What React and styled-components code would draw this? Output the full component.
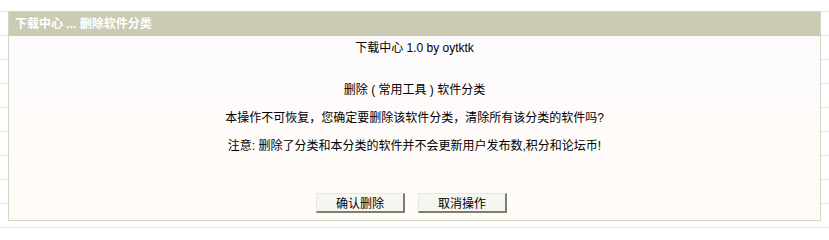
import React from "react";
import styled, { createGlobalStyle } from "styled-components";

const Global = createGlobalStyle`
  html, body { margin: 0; padding: 0; }
  body {
    background-color: #ffffff;
    background-image: repeating-linear-gradient(
      to bottom,
      transparent 0px,
      transparent 11px,
      #e3e3e3 11px,
      #e3e3e3 12px,
      transparent 12px,
      transparent 24px
    );
    font-family: "Liberation Sans", "Noto Sans CJK SC", sans-serif;
    font-size: 12px;
    color: #000;
    height: 233px;
    overflow: hidden;
  }
`;

const Page = styled.div`
  padding: 11px 8px 0 8px;
`;

const Panel = styled.div`
  border: 1px solid #d6d6c6;
  background: linear-gradient(to bottom, #fdfafd 0%, #fffcf7 100%);
  padding: 0;
`;

const Header = styled.div`
  height: 24px;
  line-height: 24px;
  background: #cbcbb3;
  color: #ffffff;
  font-weight: bold;
  padding-left: 6px;
  font-size: 12px;
`;

const Body = styled.div`
  display: flex;
  flex-direction: column;
  align-items: center;
  padding-bottom: 7px;
`;

const Line = styled.div`
  height: ${(p) => p.$h || 28}px;
  line-height: ${(p) => p.$h || 28}px;
  margin-top: ${(p) => p.$mt || 0}px;
  text-align: center;
  white-space: nowrap;
`;

const Buttons = styled.div`
  display: flex;
  gap: 13px;
  margin-top: 33px;
  padding-right: 6px;
`;

const Button = styled.button`
  width: ${(p) => p.$w}px;
  height: 20px;
  padding: 0;
  font-family: "Liberation Sans", "Noto Sans CJK SC", sans-serif;
  font-size: 12px;
  color: #000;
  background: #f6f6f1;
  border-style: solid;
  border-width: 1px 2px 2px 1px;
  border-color: #e6e6de #7d7d72 #7d7d72 #e6e6de;
  cursor: pointer;
`;

export default function App() {
  return (
    <>
      <Global />
      <Page>
        <Panel>
          <Header>下载中心 ... 删除软件分类</Header>
          <Body>
            <Line $h={24}>下载中心 1.0 by oytktk</Line>
            <Line $mt={16}>删除 ( 常用工具 ) 软件分类</Line>
            <Line>本操作不可恢复，您确定要删除该软件分类，清除所有该分类的软件吗?</Line>
            <Line>注意: 删除了分类和本分类的软件并不会更新用户发布数,积分和论坛币!</Line>
            <Buttons>
              <Button $w={89}>确认删除</Button>
              <Button $w={89}>取消操作</Button>
            </Buttons>
          </Body>
        </Panel>
      </Page>
    </>
  );
}
